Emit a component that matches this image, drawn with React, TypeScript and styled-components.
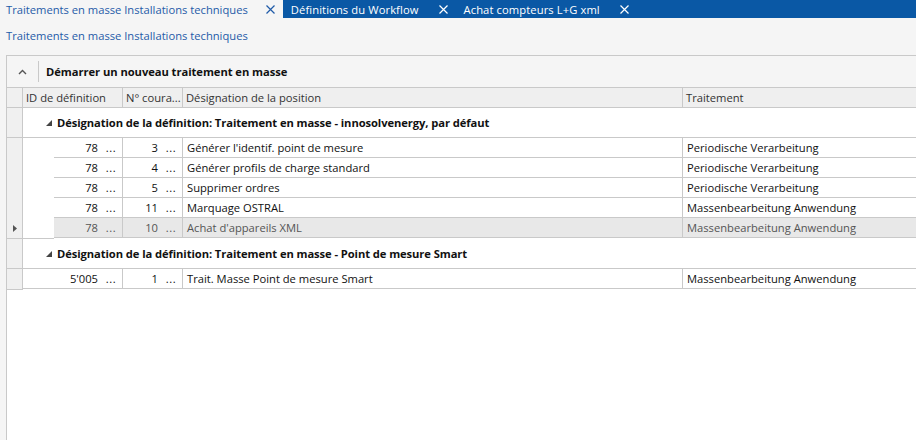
import styled, { createGlobalStyle } from 'styled-components';

const GlobalStyle = createGlobalStyle`
  *, *::before, *::after {
    box-sizing: border-box;
  }
  html, body {
    margin: 0;
    padding: 0;
    background: #f5f5f5;
  }
  body {
    font-family: 'Open Sans', 'Noto Sans', sans-serif;
    font-size: 11.2px;
    color: #1b1b1b;
  }
`;

const LINE = '#c9c9c9';

const Page = styled.div`
  width: 916px;
  height: 440px;
  overflow: hidden;
  display: flex;
  flex-direction: column;
`;

const TabBar = styled.div`
  display: flex;
  height: 18px;
  flex: none;
  background: #0a58a5;
`;

const Tab = styled.div<{ active?: boolean }>`
  display: flex;
  align-items: center;
  height: 100%;
  padding: 0 8px 0 ${(p) => (p.active ? '6px' : '8px')};
  background: ${(p) => (p.active ? '#f5f5f5' : 'transparent')};
  color: ${(p) => (p.active ? '#1f5ba8' : '#ffffff')};
  letter-spacing: ${(p) => (p.active ? '0' : '0.1px')};
  white-space: nowrap;
`;

const TabClose = styled.span<{ active?: boolean }>`
  display: flex;
  margin-left: ${(p) => (p.active ? '18px' : '20px')};
`;

const Crumb = styled.div`
  height: 37px;
  flex: none;
  display: flex;
  align-items: center;
  padding: 0 0 3px 6px;
  color: #1f5ba8;
`;

const Grid = styled.div`
  flex: 1;
  margin-left: 6px;
  border-left: 1px solid ${LINE};
  border-top: 1px solid ${LINE};
  background: #ffffff;
  display: flex;
  flex-direction: column;
`;

const Panel = styled.div`
  height: 32px;
  flex: none;
  display: flex;
  align-items: center;
  background: #f5f5f5;
  border-bottom: 1px solid ${LINE};
`;

const Collapse = styled.div`
  width: 32px;
  height: 21px;
  display: flex;
  align-items: center;
  justify-content: center;
  border-right: 1px solid ${LINE};
  margin-right: 7px;
`;

const PanelTitle = styled.span`
  font-weight: 700;
  color: #111;
  letter-spacing: -0.05px;
`;

const HeaderRow = styled.div`
  height: 20px;
  flex: none;
  display: flex;
  background: #efefef;
  border-bottom: 1px solid ${LINE};
  color: #333;
`;

const Indicator = styled.div`
  width: 16px;
  flex: none;
  background: #f0f0f0;
  border-right: 1px solid ${LINE};
`;

const HeadCell = styled.div<{ w?: number }>`
  ${(p) => (p.w ? `width: ${p.w}px; flex: none; border-right: 1px solid ${LINE};` : 'flex: 1;')}
  display: flex;
  align-items: center;
  padding-left: 3px;
  white-space: nowrap;
  overflow: hidden;
`;

const GroupRow = styled.div`
  height: 30px;
  display: flex;
  border-bottom: 1px solid ${LINE};
`;

const GroupLabel = styled.div`
  flex: 1;
  display: flex;
  align-items: center;
  gap: 5px;
  padding-left: 23px;
  font-weight: 700;
  color: #111;
  letter-spacing: -0.08px;
  white-space: nowrap;
`;

const GroupBody = styled.div`
  display: flex;
`;

const BodyIndicator = styled.div`
  width: 16px;
  flex: none;
  background: #f0f0f0;
  border-right: 1px solid ${LINE};
  border-bottom: 1px solid ${LINE};
  display: flex;
  flex-direction: column;
`;

const IndicatorSlot = styled.div`
  height: 20px;
  display: flex;
  align-items: center;
  justify-content: center;
`;

const Indent = styled.div<{ w: number }>`
  width: ${(p) => p.w}px;
  flex: none;
  border-bottom: 1px solid ${LINE};
`;

const Rows = styled.div`
  flex: 1;
  display: flex;
  flex-direction: column;
`;

const Row = styled.div<{ selected?: boolean }>`
  height: 20px;
  display: flex;
  border-bottom: 1px solid ${LINE};
  background: ${(p) => (p.selected ? '#e8e8e8' : '#ffffff')};
  color: ${(p) => (p.selected ? '#555555' : '#111111')};
`;

const Cell = styled.div<{ w?: number }>`
  ${(p) => (p.w ? `width: ${p.w}px; flex: none; border-right: 1px solid ${LINE};` : 'flex: 1;')}
  display: flex;
  align-items: center;
  padding-left: 4px;
  white-space: nowrap;
  overflow: hidden;
`;

const NumCell = styled.div<{ w: number }>`
  width: ${(p) => p.w}px;
  flex: none;
  border-right: 1px solid ${LINE};
  display: flex;
  align-items: center;
  white-space: nowrap;
`;

const NumValue = styled.span`
  flex: 1;
  text-align: right;
  padding-right: 2px;
`;

const Dots = styled.span`
  width: 22px;
  text-align: center;
  letter-spacing: 0.5px;
`;

const CloseIcon = ({ color }: { color: string }) => (
  <svg width="9" height="9" viewBox="0 0 9 9">
    <path d="M0.5 0.5 L8.5 8.5 M8.5 0.5 L0.5 8.5" stroke={color} strokeWidth="1.2" />
  </svg>
);

const ChevronUp = () => (
  <svg width="9" height="6" viewBox="0 0 9 6">
    <path d="M1 5 L4.5 1.5 L8 5" stroke="#555" strokeWidth="1.4" fill="none" />
  </svg>
);

const GroupGlyph = () => (
  <svg width="6" height="6" viewBox="0 0 6 6">
    <polygon points="6,0 6,6 0,6" fill="#444" />
  </svg>
);

const RowArrow = () => (
  <svg width="4" height="7" viewBox="0 0 4 7">
    <polygon points="0,0 4,3.5 0,7" fill="#555" />
  </svg>
);

interface IItem {
  id: string;
  num: string;
  name: string;
  kind: string;
  selected?: boolean;
}

interface IGroup {
  title: string;
  indent: number;
  items: IItem[];
}

const groups: IGroup[] = [
  {
    title: 'Désignation de la définition: Traitement en masse - innosolvenergy, par défaut',
    indent: 31,
    items: [
      { id: '78', num: '3', name: "Générer l'identif. point de mesure", kind: 'Periodische Verarbeitung' },
      { id: '78', num: '4', name: 'Générer profils de charge standard', kind: 'Periodische Verarbeitung' },
      { id: '78', num: '5', name: 'Supprimer ordres', kind: 'Periodische Verarbeitung' },
      { id: '78', num: '11', name: 'Marquage OSTRAL', kind: 'Massenbearbeitung Anwendung' },
      { id: '78', num: '10', name: "Achat d'appareils XML", kind: 'Massenbearbeitung Anwendung', selected: true },
    ],
  },
  {
    title: 'Désignation de la définition: Traitement en masse - Point de mesure Smart',
    indent: 0,
    items: [
      { id: "5'005", num: '1', name: 'Trait. Masse Point de mesure Smart', kind: 'Massenbearbeitung Anwendung' },
    ],
  },
];

const tabs = [
  { label: 'Traitements en masse Installations techniques', active: true },
  { label: 'Définitions du Workflow' },
  { label: 'Achat compteurs L+G xml' },
];

export default function App() {
  return (
    <Page>
      <GlobalStyle />
      <TabBar>
        {tabs.map((t) => (
          <Tab key={t.label} active={t.active}>
            {t.label}
            <TabClose active={t.active}>
              <CloseIcon color={t.active ? '#1f5ba8' : '#ffffff'} />
            </TabClose>
          </Tab>
        ))}
      </TabBar>
      <Crumb>Traitements en masse Installations techniques</Crumb>
      <Grid>
        <Panel>
          <Collapse>
            <ChevronUp />
          </Collapse>
          <PanelTitle>Démarrer un nouveau traitement en masse</PanelTitle>
        </Panel>
        <HeaderRow>
          <Indicator />
          <HeadCell w={100}>ID de définition</HeadCell>
          <HeadCell w={60}>N° coura...</HeadCell>
          <HeadCell w={500}>Désignation de la position</HeadCell>
          <HeadCell>Traitement</HeadCell>
        </HeaderRow>
        {groups.map((g) => (
          <div key={g.title}>
            <GroupRow>
              <Indicator />
              <GroupLabel>
                <GroupGlyph />
                {g.title}
              </GroupLabel>
            </GroupRow>
            <GroupBody>
              <BodyIndicator>
                {g.items.map((it, i) => (
                  <IndicatorSlot key={i}>{it.selected && <RowArrow />}</IndicatorSlot>
                ))}
              </BodyIndicator>
              {g.indent > 0 && <Indent w={g.indent} />}
              <Rows>
                {g.items.map((it, i) => (
                  <Row key={i} selected={it.selected}>
                    <NumCell w={100 - g.indent}>
                      <NumValue>{it.id}</NumValue>
                      <Dots>...</Dots>
                    </NumCell>
                    <NumCell w={60}>
                      <NumValue>{it.num}</NumValue>
                      <Dots>...</Dots>
                    </NumCell>
                    <Cell w={500}>{it.name}</Cell>
                    <Cell>{it.kind}</Cell>
                  </Row>
                ))}
              </Rows>
            </GroupBody>
          </div>
        ))}
      </Grid>
    </Page>
  );
}
